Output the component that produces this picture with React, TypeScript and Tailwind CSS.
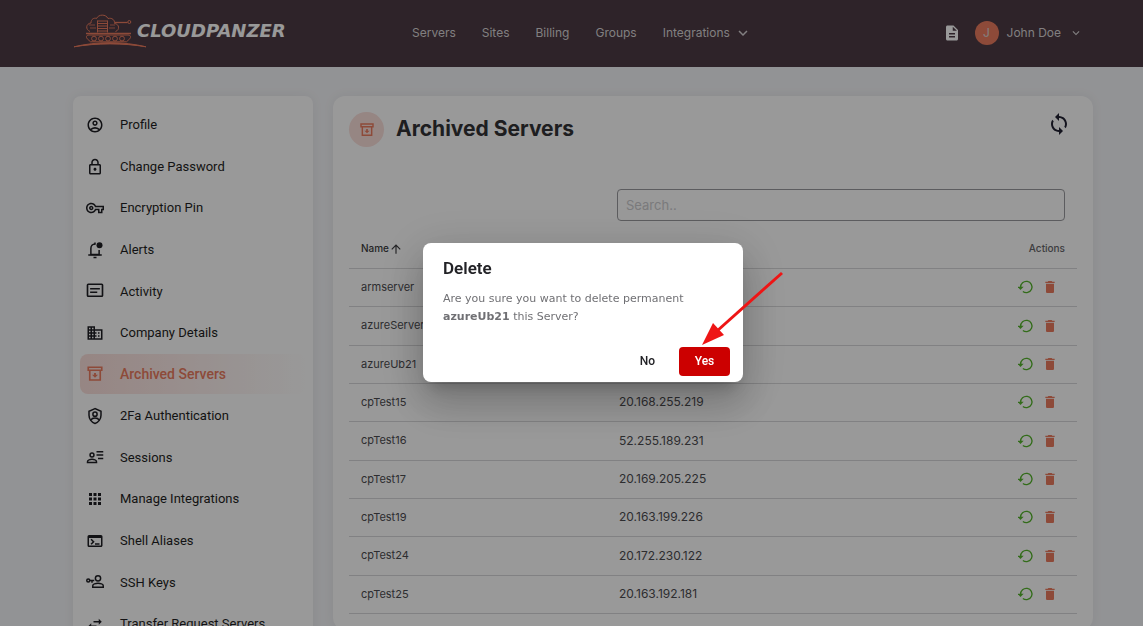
import type { ReactNode } from 'react'
import {
  MdApps,
  MdArrowUpward,
  MdBusiness,
  MdDelete,
  MdDescription,
  MdExpandMore,
  MdOutlineAccountCircle,
  MdOutlineLock,
  MdOutlineTerminal,
  MdOutlineVpnKey,
  MdSwapHoriz,
  MdSync,
} from 'react-icons/md'

function Icon({ children, size = 18 }: { children: ReactNode; size?: number }) {
  return (
    <svg width={size} height={size} viewBox="0 0 24 24" fill="none" stroke="currentColor" strokeWidth="2">
      {children}
    </svg>
  )
}

function BellIcon() {
  return (
    <Icon>
      <path d="M12 4C8.700 4 6.500 6.800 6.500 10v8h11v-6" />
      <path d="M3 18.500h18M12 2v3M10 22h4" />
      <circle cx="18" cy="5.500" r="4" fill="currentColor" stroke="none" />
    </Icon>
  )
}

function ActivityIcon() {
  return (
    <Icon>
      <rect x="2" y="3" width="20" height="16" rx="1" strokeWidth="2.200" />
      <path d="M5.500 9h13M5.500 13.500h9.500" />
    </Icon>
  )
}

function ArchiveIcon({ size = 18 }: { size?: number }) {
  return (
    <Icon size={size}>
      <path d="M3 3h18v4H3zM5 8v12h14V8" strokeWidth="2.200" />
      <path d="M12 10.500v3" strokeWidth="2.500" />
      <path d="M8 13h8l-4 4z" fill="currentColor" stroke="none" />
    </Icon>
  )
}

function ShieldUserIcon() {
  return (
    <Icon>
      <path d="M12 2.200 4 5.700V11c0 5 3.400 9.700 8 11 4.600-1.300 8-6 8-11V5.700z" />
      <circle cx="12" cy="9.500" r="2.800" />
      <path d="M6.500 17.500c1-2 3.200-2.700 5.500-2.700s4.500.7 5.500 2.700" />
    </Icon>
  )
}

function SessionsIcon() {
  return (
    <Icon>
      <circle cx="8" cy="8" r="2.600" />
      <path d="M2 18v-1c0-2.200 3.700-3.300 6-3.300s6 1.100 6 3.300v1z" />
      <path d="M14 3.500h9M14 8h9M16 12.500h7" />
    </Icon>
  )
}

function SshIcon() {
  return (
    <Icon>
      <circle cx="16" cy="7" r="3.500" />
      <path d="M9 19v-2c0-2 4-3.200 7-3.200s7 1.200 7 3.200v2z" />
      <circle cx="3" cy="10" r="2" />
      <path d="M5 10h6M8 10v3" />
    </Icon>
  )
}

function RestoreIcon() {
  return (
    <Icon size={16}>
      <path d="M4 12.500a8.500 8.500 0 1 1 3.300 6.200" />
      <path d="M-1 11.500h9.500l-4.750 5z" fill="currentColor" stroke="none" />
    </Icon>
  )
}

function Logo() {
  return (
    <svg width="74" height="36" viewBox="0 0 74 36" fill="none" stroke="#ec7c5f" strokeWidth="1">
      <path d="M17 18.500c-5-2-4-8 1-8.500 0-4 3-5.500 5.500-4.500C25.500 1 33 1 35 5.500c4-1 7 1.500 6.500 5 5 .5 5.500 6.500 1 8" />
      <path d="M24.500 8h10M24.500 10.500h10M24.500 13h10M24.500 15.500h10M24.500 18h10M24.500 7.500v12M34.500 7.500v12" />
      <path d="M16 12h6M17 15h6M37 12h5M36 15h6" strokeWidth=".8" />
      <path d="M42 9.500h12.500" strokeWidth="1.300" />
      <circle cx="56.300" cy="9" r="1.500" />
      <path d="M13 20.500h45" strokeWidth="1.500" />
      <path d="M16 22h39c3.500 0 3 3 1 4.500l-2.500 2.300h-36L15 26.500c-2-1.500-2.500-4.500 1-4.500z" />
      {[21, 28, 35, 42, 49].map(x => (
        <circle key={x} cx={x} cy="25.600" r="2.400" />
      ))}
      <path d="M1 33.800C24 28.300 50 28.300 73 33.800 50 29.900 24 29.900 1 33.800z" fill="#ec7c5f" />
    </svg>
  )
}

const NAV = ['Servers', 'Sites', 'Billing', 'Groups']

const MENU = [
  { label: 'Profile', icon: <MdOutlineAccountCircle size={18} /> },
  { label: 'Change Password', icon: <MdOutlineLock size={18} /> },
  { label: 'Encryption Pin', icon: <MdOutlineVpnKey size={18} /> },
  { label: 'Alerts', icon: <BellIcon /> },
  { label: 'Activity', icon: <ActivityIcon /> },
  { label: 'Company Details', icon: <MdBusiness size={18} /> },
  { label: 'Archived Servers', icon: <ArchiveIcon />, active: true },
  { label: '2Fa Authentication', icon: <ShieldUserIcon /> },
  { label: 'Sessions', icon: <SessionsIcon /> },
  { label: 'Manage Integrations', icon: <MdApps size={18} /> },
  { label: 'Shell Aliases', icon: <MdOutlineTerminal size={18} /> },
  { label: 'SSH Keys', icon: <SshIcon /> },
  { label: 'Transfer Request Servers', icon: <MdSwapHoriz size={18} /> },
]

const SERVERS = [
  { name: 'armserver', ip: '' },
  { name: 'azureServer01', ip: '' },
  { name: 'azureUb21', ip: '' },
  { name: 'cpTest15', ip: '20.168.255.219' },
  { name: 'cpTest16', ip: '52.255.189.231' },
  { name: 'cpTest17', ip: '20.169.205.225' },
  { name: 'cpTest19', ip: '20.163.199.226' },
  { name: 'cpTest24', ip: '20.172.230.122' },
  { name: 'cpTest25', ip: '20.163.192.181' },
]

function Header() {
  return (
    <header className="flex h-[67px] items-center bg-[#4d3b45] pb-0.5 pl-[73px] pr-[60px] font-[Inter,sans-serif] text-xs text-[#d8d4d6]">
      <a href="#" className="flex w-[339px] shrink-0 items-center pb-1">
        <Logo />
        <span className="-ml-2.5 font-['DejaVu_Sans',sans-serif] text-lg leading-5 font-bold italic text-white">
          CLOUDPANZER
        </span>
      </a>
      <nav className="flex items-center gap-[26px]">
        {NAV.map(item => (
          <a key={item} href="#">{item}</a>
        ))}
        <button className="flex items-center gap-1">
          Integrations
          <MdExpandMore size={18} className="stroke-current" />
        </button>
      </nav>
      <div className="flex flex-1 items-center justify-end">
        <button aria-label="Documentation" className="mr-3.5 text-white">
          <MdDescription size={18} />
        </button>
        <button className="flex items-center">
          <span className="mr-2 flex size-6 items-center justify-center rounded-full bg-[#ec7c5f]">J</span>
          John Doe
          <MdExpandMore size={14} className="ml-2" />
        </button>
      </div>
    </header>
  )
}

function Sidebar() {
  return (
    <aside className="w-60 shrink-0 rounded-lg bg-white px-[7px] pb-2 pt-[9px] shadow-[0_0_12px_rgba(0,0,0,0.06)]">
      <ul className="flex h-[539px] flex-col justify-between text-[13px]">
        {MENU.map(item => (
          <li key={item.label}>
            <a
              href="#"
              className={`flex h-10 items-center gap-4 rounded-lg pl-1.5 ${
                item.active
                  ? 'bg-linear-to-r from-[#fbdfdb] to-white text-sm font-medium text-[#ec7c5f]'
                  : 'text-[#1f1f24]'
              }`}
            >
              <span className="flex w-[18px] shrink-0 justify-center">{item.icon}</span>
              {item.label}
            </a>
          </li>
        ))}
      </ul>
    </aside>
  )
}

function ServerTable() {
  return (
    <table className="mt-[9px] w-full table-fixed text-left text-[11px] text-[#4c4c50]">
      <thead>
        <tr className="h-[38px] border-b border-[#d8d8da] text-[10px]">
          <th className="w-[258px] px-3 font-medium text-[#3c3c40]">
            <button className="flex items-center">
              Name
              <MdArrowUpward size={14} />
            </button>
          </th>
          <th className="px-3" />
          <th className="w-[100px] px-3 text-right font-medium text-[#66666a]">Actions</th>
        </tr>
      </thead>
      <tbody>
        {SERVERS.map(server => (
          <tr key={server.name} className="h-[38px] border-b border-[#d8d8da] nth-[3n+2]:h-[39px]">
            <td className="px-3">{server.name}</td>
            <td className="px-3 text-xs">{server.ip}</td>
            <td className="px-3">
              <div className="flex items-center justify-end gap-2 pr-[7px]">
                <button aria-label={`Restore ${server.name}`} className="text-[#55b52c]">
                  <RestoreIcon />
                </button>
                <button aria-label={`Delete ${server.name}`} className="text-[#ec7c5f]">
                  <MdDelete size={16} />
                </button>
              </div>
            </td>
          </tr>
        ))}
      </tbody>
    </table>
  )
}

function DeleteDialog() {
  return (
    <div className="fixed inset-0 flex items-center justify-center bg-black/40 pb-0.5 pl-[23px]">
      <div
        role="dialog"
        aria-labelledby="delete-title"
        className="relative w-80 rounded-lg bg-white pb-1.5 pl-5 pr-[13px] pt-[13px] shadow-[0_11px_15px_-7px_rgba(0,0,0,0.2),0_24px_38px_3px_rgba(0,0,0,0.14),0_9px_46px_8px_rgba(0,0,0,0.12)]"
      >
        <h2 id="delete-title" className="text-[17px] font-semibold leading-6 text-[#222226]">Delete</h2>
        <p className="mt-2.5 font-['DejaVu_Sans',sans-serif] text-[11px] leading-[18px] text-[#707074]">
          Are you sure you want to delete permanent <b>azureUb21</b> this Server?
        </p>
        <div className="mt-[21px] flex justify-end gap-2 text-xs font-medium">
          <button className="h-[29px] px-4 text-[#222226]">No</button>
          <button className="h-[29px] w-[51px] rounded-sm bg-[#cc0000] text-white">Yes</button>
        </div>

        {/* Pointer to the confirm button */}
        <svg className="pointer-events-none absolute left-[278px] top-7" width="84" height="76" viewBox="0 0 84 76">
          <path d="M81 2 16 60" stroke="#ee1515" strokeWidth="3" />
          <path d="M1 74 12 52l11 12z" fill="#ee1515" />
        </svg>
      </div>
    </div>
  )
}

export default function App() {
  return (
    <div className="h-screen overflow-hidden bg-[#f4f5f8] font-[Roboto,sans-serif]">
      <Header />
      <div className="flex items-start gap-5 pl-[73px] pr-[50px] pt-[29px]">
        <Sidebar />
        <main className="min-w-0 flex-1 rounded-xl bg-white p-4 font-[Inter,sans-serif] shadow-[0_0_12px_rgba(0,0,0,0.06)]">
          <div className="flex h-[35px] items-center gap-3">
            <span className="flex size-[35px] items-center justify-center rounded-full bg-[#fbdfdb] text-[#ec7c5f]">
              <ArchiveIcon size={16} />
            </span>
            <h1 className="flex-1 pb-0.5 text-[21px] font-bold text-[#333336]">Archived Servers</h1>
            <button aria-label="Refresh" className="mb-3 mr-1.5 text-[#222233]">
              <MdSync size={24} />
            </button>
          </div>
          <div className="mt-[42px] flex justify-end pr-3">
            <input
              type="text"
              aria-label="Search"
              placeholder="Search.."
              className="h-8 w-[448px] rounded-sm border border-[#9a9a9e] px-2 text-[13px] placeholder:text-[#cccccf]"
            />
          </div>
          <ServerTable />
        </main>
      </div>
      <DeleteDialog />
    </div>
  )
}
